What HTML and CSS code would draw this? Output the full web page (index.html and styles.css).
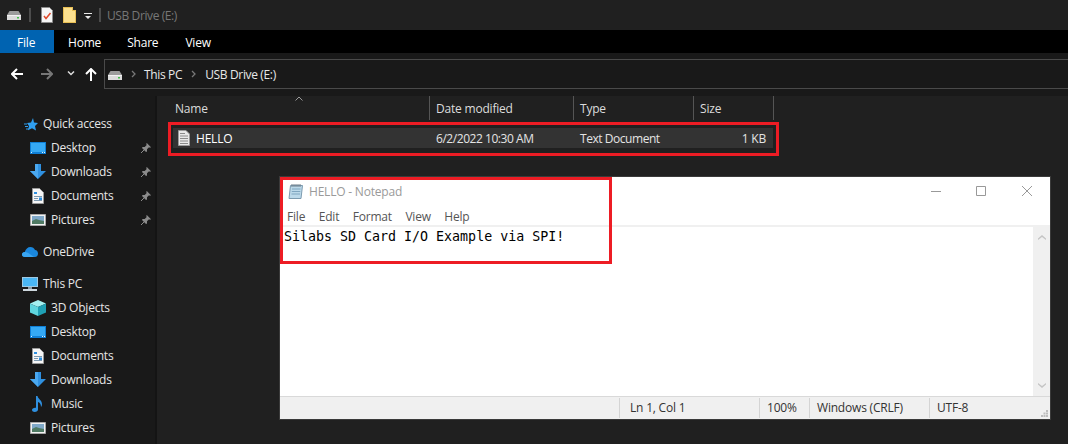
FILE: index.html
```html
<!DOCTYPE html>
<html>
<head>
    <title>USB Drive (E:)</title>
    <link rel="stylesheet" href="styles.css">
</head>
<body>
    <svg class="sprite" width="0" height="0">
        <symbol id="i-drive" viewBox="0 0 14 9">
            <path d="M2.500 0h9L14 4H0z" fill="#9c9c9c"/>
            <path d="M0 4h14v5H0z" fill="#dcdcdc"/>
            <path d="M0 4h14v1H0z" fill="#f2f2f2"/>
            <path d="M10 6h2v1.500h-2z" fill="#43c04a"/>
        </symbol>
        <symbol id="i-pin" viewBox="0 0 10 10">
            <path d="M5.800 0 10 4.200 9 4.800 8 4.300 6 6.300 6 8.500 5 9 1 5 1.500 4 3.700 4 5.700 2 5.200 1z" fill="#8b8b8b"/>
            <path d="M3 7 0 10" stroke="#8b8b8b" fill="none"/>
        </symbol>
        <symbol id="i-desktop" viewBox="0 0 16 12">
            <path d="M0 0h16v12H0z" fill="#0f7fd6"/>
            <path d="M1 1h14v9H1z" fill="#35a9f5"/>
            <path d="M1 10h1v1H1zM12 10h1v1h-1zM14 10h1v1h-1z" fill="#d8f0ff"/>
        </symbol>
        <symbol id="i-download" viewBox="0 0 16 16">
            <path d="M5 0h6v7h5l-8 8-8-8h5z" fill="#2f90e0"/>
            <path d="M5 0h3v15L0 7h5z" fill="#4aa8f0"/>
        </symbol>
        <symbol id="i-doc" viewBox="0 0 12 16">
            <path d="M.5.500h7l4 4v11H.5z" fill="#f6f6f6" stroke="#9a9a9a"/>
            <path d="M2 4h3v2H2z" fill="#2f90e0"/>
            <path d="M2 8h8v1H2zM2 10h4v1H2zM2 12h8v1H2z" fill="#7d99b0"/>
            <path d="M7 9.500h3V12H7z" fill="#2f90e0"/>
        </symbol>
        <symbol id="i-pic" viewBox="0 0 16 12">
            <path d="M.5.500h15v11H.5z" fill="#f2f2f2" stroke="#a8a8a8"/>
            <path d="M2 2h12v8H2z" fill="#7fa8c8"/>
            <path d="M2 7l4-2 3 1 5 1v3H2z" fill="#4f7a63"/>
        </symbol>
        <symbol id="i-star" viewBox="0 0 14 13">
            <path d="M9 0l1 4.500 4 .500-3 3 1 4.500-4-2.200-4 2 1-4.300L3 5l4-.500z" fill="#2f9ff0"/>
            <path d="M0 6h3M1 8.500h3M2 11h3" stroke="#2f9ff0" fill="none"/>
        </symbol>
        <symbol id="i-cloud" viewBox="0 0 16 10">
            <path d="M3 10C1 10 0 8.800 0 7.500 0 6 1.200 5 2.800 5 3.500 2 5.800 0 8.500 0c2 0 3.700 1 4.500 3 1.800.200 3 1.500 3 3.500 0 2-1.300 3.500-3 3.500z" fill="#1a87dd"/>
            <path d="M3 10c-2 0-3-1.200-3-2.500C0 6 1.200 5 2.800 5 4 5 5.500 5.500 7 6.500l5 3.500z" fill="#3aa6f2"/>
        </symbol>
        <symbol id="i-pc" viewBox="0 0 16 14">
            <path d="M0 0h16v10H0z" fill="#9fc9e2"/>
            <path d="M1 1h14v8H1z" fill="#4ab6f4"/>
            <path d="M6 10h4v2H6z" fill="#8a9aa6"/>
            <path d="M1 12h14v2H1z" fill="#cfd8de"/>
        </symbol>
        <symbol id="i-cube" viewBox="0 0 16 16">
            <path d="M8 0l8 3.500L8 7 0 3.500z" fill="#a4f0f0"/>
            <path d="M0 3.500 8 7v9l-8-3.500z" fill="#5fd6de"/>
            <path d="M16 3.500 8 7v9l8-3.500z" fill="#1fa0b4"/>
        </symbol>
        <symbol id="i-music" viewBox="0 0 12 16">
            <path d="M4 0h1.500c.500 3 4.500 4 4.500 8 0 1.500-.500 2.500-1 3 .100-3-1.500-4.500-3-5v7.500C6 15 4.500 16 2.800 16 1.200 16 0 15.200 0 14c0-1.500 1.800-2.500 4-2.200z" fill="#2f90e0"/>
        </symbol>
        <symbol id="i-file" viewBox="0 0 12 16">
            <path d="M.5.500h7.500l3.500 3.500v11.500H.5z" fill="#e8e8e8" stroke="#9a9a9a"/>
            <path d="M2 3h5v1H2zM2 5.500h8v1H2zM2 8h8v1H2zM2 10.500h8v1H2zM2 13h8v1H2z" fill="#8a8a8a"/>
        </symbol>
        <symbol id="i-check" viewBox="0 0 12 16">
            <path d="M.5.500h8l3 3v12H.5z" fill="#f6f6f6" stroke="#8c8c8c"/>
            <path d="M3 9l2 2.500L9.500 6" stroke="#e0492a" stroke-width="1.500" fill="none"/>
        </symbol>
        <symbol id="i-folder" viewBox="0 0 13 16">
            <path d="M0 0h10v3h3v13H0z" fill="#e8bf55"/>
            <path d="M1 1h8v3h3v11H1z" fill="#fbe08f"/>
        </symbol>
        <symbol id="i-notepad" viewBox="0 0 16 16">
            <path d="M2.500 2.500h12l-1.500 13H1z" fill="#bcd9ea" stroke="#7c9bb0"/>
            <path d="M4 6h8.500M3.800 8.500h8.500M3.500 11h8.500" stroke="#7fa6c0" fill="none"/>
            <path d="M4 1v3M6 1v3M8 1v3M10 1v3M12 1v3" stroke="#6f7d88" fill="none"/>
        </symbol>
    </svg>

    <div class="titlebar">
        <svg class="qa-drive"><use href="#i-drive"/></svg>
        <span class="qa-sep"></span>
        <svg class="qa-check"><use href="#i-check"/></svg>
        <svg class="qa-folder"><use href="#i-folder"/></svg>
        <svg class="qa-caret" viewBox="0 0 8 7"><path d="M0 0h8v1H0zM1 3h6L4 6z" fill="#e8e8e8"/></svg>
        <span class="qa-sep qa-sep-2"></span>
        <span class="title-text">USB Drive (E:)</span>
    </div>

    <div class="tabs">
        <span class="tab tab-file">File</span>
        <span class="tab tab-home">Home</span>
        <span class="tab tab-share">Share</span>
        <span class="tab tab-view">View</span>
    </div>

    <div class="navrow">
        <svg class="nav-back" viewBox="0 0 12 12"><path d="M6 1 1 6l5 5M1 6h11" stroke="#fff" stroke-width="2" fill="none"/></svg>
        <svg class="nav-fwd" viewBox="0 0 12 12"><path d="M6 1l5 5-5 5M11 6H0" stroke="#777" stroke-width="2" fill="none"/></svg>
        <svg class="nav-down" viewBox="0 0 8 5"><path d="M1 .500l3 3 3-3" stroke="#ddd" stroke-width="1.500" fill="none"/></svg>
        <svg class="nav-up" viewBox="0 0 12 13"><path d="M1 6l5-5 5 5M6 1v12" stroke="#fff" stroke-width="2" fill="none"/></svg>
        <div class="addr">
            <svg class="addr-drive"><use href="#i-drive"/></svg>
            <svg class="crumb-arrow" viewBox="0 0 5 8"><path d="M1 1l3 3-3 3" stroke="#777" stroke-width="1.300" fill="none"/></svg>
            <span class="crumb">This PC</span>
            <svg class="crumb-arrow" viewBox="0 0 5 8"><path d="M1 1l3 3-3 3" stroke="#777" stroke-width="1.300" fill="none"/></svg>
            <span class="crumb crumb-last">USB Drive (E:)</span>
        </div>
    </div>

    <div class="main">
        <nav class="sidebar">
            <div class="group">
                <div class="item top"><svg class="ic ic-star"><use href="#i-star"/></svg>Quick access</div>
                <div class="item"><svg class="ic ic-wide"><use href="#i-desktop"/></svg>Desktop<svg class="pin"><use href="#i-pin"/></svg></div>
                <div class="item"><svg class="ic ic-tall"><use href="#i-download"/></svg>Downloads<svg class="pin"><use href="#i-pin"/></svg></div>
                <div class="item"><svg class="ic ic-tall"><use href="#i-doc"/></svg>Documents<svg class="pin"><use href="#i-pin"/></svg></div>
                <div class="item"><svg class="ic ic-wide"><use href="#i-pic"/></svg>Pictures<svg class="pin"><use href="#i-pin"/></svg></div>
            </div>
            <div class="group">
                <div class="item top"><svg class="ic ic-cloud"><use href="#i-cloud"/></svg>OneDrive</div>
            </div>
            <div class="group">
                <div class="item top"><svg class="ic ic-pc"><use href="#i-pc"/></svg>This PC</div>
                <div class="item"><svg class="ic ic-tall"><use href="#i-cube"/></svg>3D Objects</div>
                <div class="item"><svg class="ic ic-wide"><use href="#i-desktop"/></svg>Desktop</div>
                <div class="item"><svg class="ic ic-tall"><use href="#i-doc"/></svg>Documents</div>
                <div class="item"><svg class="ic ic-tall"><use href="#i-download"/></svg>Downloads</div>
                <div class="item"><svg class="ic ic-tall"><use href="#i-music"/></svg>Music</div>
                <div class="item"><svg class="ic ic-wide"><use href="#i-pic"/></svg>Pictures</div>
            </div>
        </nav>

        <section class="files">
            <div class="file-head">
                <svg class="sort" viewBox="0 0 8 5"><path d="M.500 4.500 4 1l3.500 3.500" stroke="#9a9a9a" fill="none"/></svg>
                <span class="col col-name">Name</span>
                <span class="col col-date">Date modified</span>
                <span class="col col-type">Type</span>
                <span class="col col-size">Size</span>
            </div>
            <div class="file-row">
                <svg class="file-ic"><use href="#i-file"/></svg>
                <span class="cell-name">HELLO</span>
                <span class="cell-date">6/2/2022 10:30 AM</span>
                <span class="cell-type">Text Document</span>
                <span class="cell-size">1 KB</span>
            </div>
        </section>
    </div>

    <div class="notepad">
        <div class="np-title">
            <svg class="np-icon"><use href="#i-notepad"/></svg>
            <span class="np-name">HELLO - Notepad</span>
            <svg class="win-min" viewBox="0 0 10 1"><path d="M0 .500h10" stroke="#999"/></svg>
            <svg class="win-max" viewBox="0 0 10 10"><path d="M.500.500h9v9h-9z" stroke="#999" fill="none"/></svg>
            <svg class="win-close" viewBox="0 0 10 10"><path d="M0 0l10 10M10 0 0 10" stroke="#999" fill="none"/></svg>
        </div>
        <div class="np-menu">
            <span>File</span><span>Edit</span><span>Format</span><span>View</span><span>Help</span>
        </div>
        <div class="np-body">
            <div class="np-text">Silabs SD Card I/O Example via SPI!</div>
            <div class="np-scroll">
                <svg viewBox="0 0 8 6"><path d="M0 4.500 4 1l4 3.500V6L4 3 0 6z" fill="#c4c4c4"/></svg>
                <svg viewBox="0 0 8 6"><path d="M0 1.500 4 5l4-3.500V0L4 3 0 0z" fill="#c4c4c4"/></svg>
            </div>
        </div>
        <div class="np-status">
            <span class="st st-fill"></span>
            <span class="st st-pos">Ln 1, Col 1</span>
            <span class="st st-zoom">100%</span>
            <span class="st st-eol">Windows (CRLF)</span>
            <span class="st st-enc">UTF-8</span>
            <svg class="grip" viewBox="0 0 7 7"><path d="M5 0h2v2H5zM2.500 2.500h2v2h-2zM5 2.500h2v2H5zM0 5h2v2H0zM2.500 5h2v2h-2zM5 5h2v2H5z" fill="#bdbdbd"/></svg>
        </div>
    </div>

    <!-- red annotation boxes -->
    <div class="mark mark-row"></div>
    <div class="mark mark-note"></div>
</body>
</html>
```

FILE: styles.css
```css
body {
    font-family: "Open Sans", Arial, sans-serif;
    font-size: 12px;
    letter-spacing: -0.2px;
    margin: 0;
    width: 1068px;
    height: 444px;
    overflow: hidden;
    position: relative;
    background-color: #202020;
    color: #fff;
}

.sprite {
    position: absolute;
}

svg {
    display: block;
    flex: none;
}

/* Title bar */
.titlebar {
    height: 30px;
    display: flex;
    align-items: center;
    background-color: #202020;
    padding-left: 7px;
}

.qa-drive { width: 14px; height: 9px; margin-top: 1px; }
.qa-sep { width: 2px; height: 14px; background-color: #4c4c4c; margin-left: 8px; }
.qa-check { width: 12px; height: 16px; margin-left: 10px; }
.qa-folder { width: 13px; height: 16px; margin-left: 10px; }
.qa-caret { width: 8px; height: 7px; margin-left: 8px; margin-top: 2px; }
.qa-sep-2 { margin-left: 7px; }
.title-text { color: #777; margin-left: 6px; letter-spacing: -0.4px; }

/* Ribbon tabs */
.tabs {
    height: 23px;
    display: flex;
    align-items: center;
    background-color: #000;
}

.tab { line-height: 25px; height: 23px; }
.tab-file { width: 54px; padding-left: 17px; box-sizing: border-box; background-color: #0063b1; }
.tab-home { margin-left: 14px; }
.tab-share { margin-left: 26px; }
.tab-view { margin-left: 27px; }

/* Navigation row */
.navrow {
    height: 43px;
    display: flex;
    align-items: center;
    background-color: #191919;
    padding-left: 11px;
    box-sizing: border-box;
    padding-bottom: 1px;
}

.nav-back { width: 12px; height: 12px; }
.nav-fwd { width: 12px; height: 12px; margin-left: 18px; }
.nav-down { width: 8px; height: 5px; margin-left: 14px; margin-top: -2px; }
.nav-up { width: 12px; height: 13px; margin-left: 10px; }

.addr {
    flex: 1;
    height: 30px;
    margin-left: 7px;
    box-sizing: border-box;
    border: 1px solid #4a4a4a;
    border-right: none;
    display: flex;
    align-items: center;
    padding-left: 3px;
}

.addr-drive { width: 14px; height: 9px; margin-top: 2px; }
.crumb-arrow { width: 5px; height: 8px; margin-left: 9px; }
.crumb { margin-left: 8px; color: #e8e8e8; letter-spacing: -0.35px; }
.crumb-last { margin-left: 9px; }

/* Main area */
.main {
    display: flex;
    height: 348px;
}

.sidebar {
    width: 157px;
    flex: none;
    box-sizing: border-box;
    padding-top: 16px;
    background-color: #191919;
    border-right: 2px solid #141414;
    display: flex;
    flex-direction: column;
    gap: 8px;
    color: #e6e6e6;
    white-space: nowrap;
}

.item {
    height: 24px;
    box-sizing: border-box;
    padding-bottom: 2px;
    display: flex;
    align-items: center;
    padding-left: 30px;
}

.item.top { padding-left: 22px; }

.ic {
    width: 16px;
    height: 16px;
    margin-top: 2px;
    margin-right: 5px;
}

.ic-star { height: 13px; width: 14px; margin-left: 2px; margin-right: 5px; }
.ic-wide { height: 12px; }
.ic-cloud { height: 10px; margin-right: 5px; }
.ic-pc { height: 14px; margin-right: 5px; }

.pin {
    width: 10px;
    height: 10px;
    margin-top: 2px;
    margin-left: auto;
    margin-right: 4px;
}

/* File list */
.files {
    flex: 1;
    background-color: #202020;
    padding-left: 16px;
}

.file-head {
    height: 24px;
    width: 601px;
    display: flex;
    position: relative;
    color: #dcdcdc;
}

.col {
    line-height: 25px;
    box-sizing: border-box;
    padding-left: 6px;
    border-right: 1px solid #555;
}

.col-name { width: 257px; padding-left: 2px; }
.col-date { width: 144px; }
.col-type { width: 120px; }
.col-size { width: 80px; }

.sort {
    position: absolute;
    left: 122px;
    top: 0;
    width: 8px;
    height: 5px;
}

.file-row {
    margin-top: 8px;
    width: 600px;
    height: 20px;
    display: flex;
    align-items: center;
    background-color: #333;
    color: #e4e4e4;
    white-space: nowrap;
}

.file-ic { width: 12px; height: 16px; margin-left: 5px; }
.cell-name { width: 240px; margin-left: 6px; color: #fff; }
.cell-date { width: 144px; letter-spacing: -0.45px; }
.cell-type { width: 100px; letter-spacing: -0.45px; }
.cell-size { width: 86px; text-align: right; }

/* Notepad window */
.notepad {
    position: absolute;
    left: 280px;
    top: 177px;
    width: 770px;
    height: 242px;
    background-color: #fff;
    box-shadow: 0 0 0 1px #3a3a3a;
    color: #444;
    display: flex;
    flex-direction: column;
}

.np-title {
    height: 28px;
    display: flex;
    align-items: center;
    flex: none;
}

.np-icon { width: 16px; height: 16px; margin-left: 8px; }
.np-name { margin-left: 5px; color: #9a9a9a; }
.win-min { width: 10px; height: 1px; margin-left: 529px; }
.win-max { width: 10px; height: 10px; margin-left: 35px; }
.win-close { width: 10px; height: 10px; margin-left: 36px; }

.np-menu {
    height: 18px;
    flex: none;
    display: flex;
    align-items: center;
    gap: 13.500px;
    padding: 2px 0 0 7px;
    border-bottom: 2px solid #f0f0f0;
    color: #555;
}

.np-body {
    flex: 1;
    display: flex;
}

.np-text {
    flex: 1;
    padding: 1px 0 0 4px;
    font-family: "DejaVu Sans Mono", "Liberation Mono", monospace;
    font-size: 13.300px;
    letter-spacing: 0;
    line-height: 17px;
    color: #000;
}

.np-scroll {
    width: 17px;
    background-color: #f0f0f0;
    display: flex;
    flex-direction: column;
    justify-content: space-between;
    align-items: center;
    padding: 7px 0;
    box-sizing: border-box;
}

.np-scroll svg { width: 8px; height: 6px; }

.np-status {
    height: 23px;
    flex: none;
    box-sizing: border-box;
    border-top: 1px solid #d9d9d9;
    background-color: #f0f0f0;
    display: flex;
    align-items: center;
    color: #333;
    position: relative;
}

.st {
    box-sizing: border-box;
    height: 20px;
    line-height: 20px;
    padding-left: 7px;
    border-left: 1px solid #d4d4d4;
    white-space: nowrap;
}

.st-fill { width: 339px; border-left: none; }
.st-pos { width: 140px; padding-left: 10px; }
.st-zoom { width: 50px; padding-left: 7px; }
.st-eol { width: 120px; }
.st-enc { flex: 1; }

.grip {
    position: absolute;
    right: 2px;
    bottom: 2px;
    width: 7px;
    height: 7px;
}

/* Red annotation boxes */
.mark {
    position: absolute;
    box-sizing: border-box;
    border: 3px solid #ed1c24;
}

.mark-row {
    left: 168px;
    top: 122px;
    width: 611px;
    height: 34px;
}

.mark-note {
    left: 280px;
    top: 177px;
    width: 332px;
    height: 87px;
}
```
